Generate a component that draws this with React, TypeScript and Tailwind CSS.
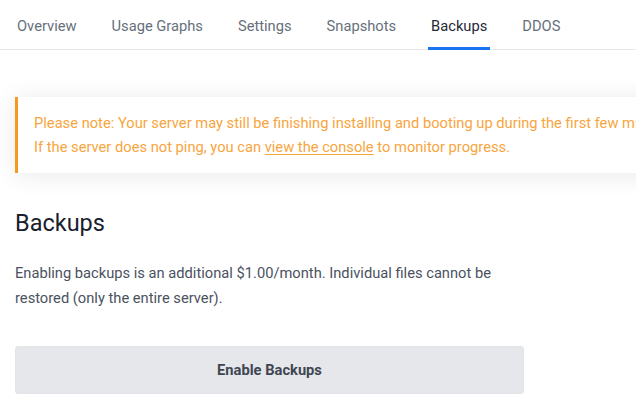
const tabs = ['Overview', 'Usage Graphs', 'Settings', 'Snapshots', 'Backups', 'DDOS'];

export default function App() {
  const active = 'Backups';

  return (
    <div className="w-[636px] h-[404px] overflow-hidden bg-white font-['Roboto',sans-serif]">
      <div className="h-[50px] flex items-stretch pl-[14px] gap-[29px] border-b border-[#e8e8ea]">
        {tabs.map(t => (
          <div
            key={t}
            className={`px-[3px] flex items-center text-[14.7px] border-b-[3px] -mb-px pt-[5px] ${t === active ? 'border-[#1a73f0] text-[#1f2937]' : 'border-transparent text-[#66707c]'}`}
          >
            {t}
          </div>
        ))}
      </div>

      <div className="pt-[47px] pl-[15px]">
        <div className="w-[700px] bg-white border-l-[3px] border-[#f7981f] shadow-[0_2px_24px_rgba(0,0,0,0.09)] pl-[16px] pt-[14px] pb-[14px] text-[14.7px] leading-[24px] text-[#f7a53e] whitespace-nowrap">
          <p>Please note: Your server may still be finishing installing and booting up during the first few minutes.</p>
          <p>
            If the server does not ping, you can <span className="underline underline-offset-2">view the console</span> to monitor progress.
          </p>
        </div>

        <h2 className="mt-[34px] text-[23.5px] leading-[32px] text-[#1a202c]">Backups</h2>

        <p className="mt-[22px] w-[509px] text-[14.7px] leading-[25px] text-[#4a5260]">
          Enabling backups is an additional $1.00/month. Individual files cannot be restored (only the entire server).
        </p>

        <button className="mt-[35px] w-[509px] h-[48px] rounded-[3px] bg-[#e5e7eb] border border-[#e2e4e8] text-[14.7px] font-bold text-[#3f4652]">
          Enable Backups
        </button>
      </div>
    </div>
  );
}
